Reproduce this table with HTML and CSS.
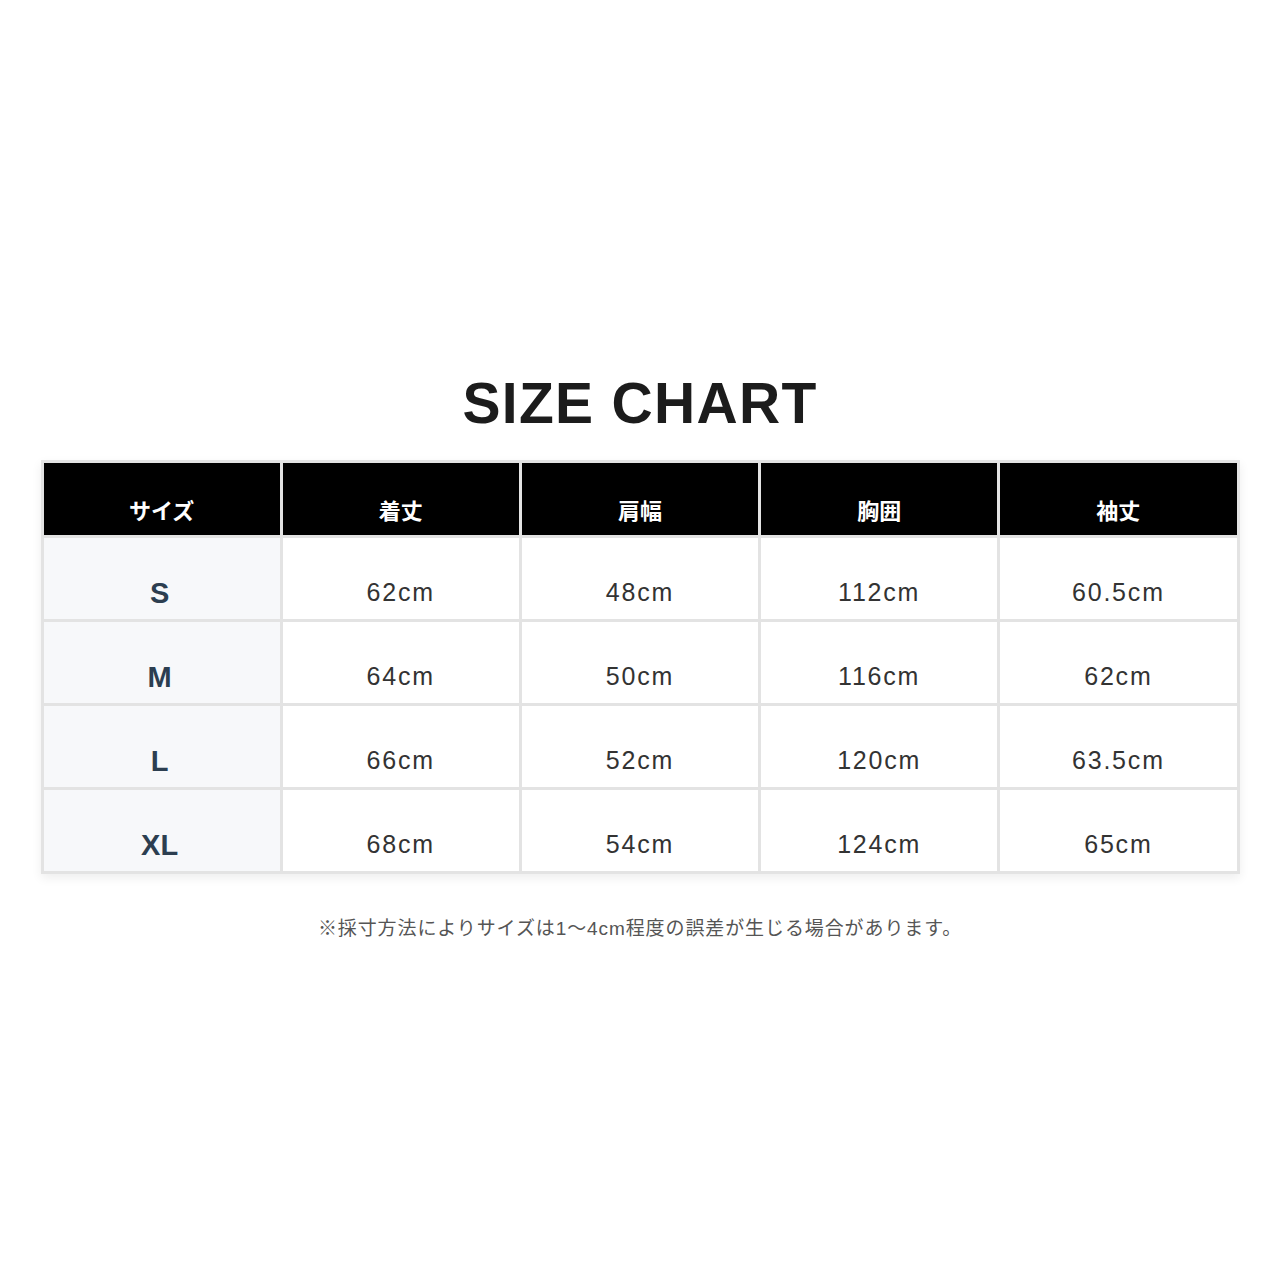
FILE: index.html
```html
<!DOCTYPE html>
<html lang="ja">
<head>
<meta charset="utf-8">
<title>SIZE CHART</title>
<link rel="stylesheet" href="styles.css">
</head>
<body>
<main class="page">
  <h1 class="title">SIZE CHART</h1>
  <table class="chart">
    <thead>
      <tr class="head-row">
        <th>サイズ</th>
        <th>着丈</th>
        <th>肩幅</th>
        <th>胸囲</th>
        <th>袖丈</th>
      </tr>
    </thead>
    <tbody>
      <tr><td class="size">S</td><td>62cm</td><td>48cm</td><td>112cm</td><td>60.5cm</td></tr>
      <tr><td class="size">M</td><td>64cm</td><td>50cm</td><td>116cm</td><td>62cm</td></tr>
      <tr><td class="size">L</td><td>66cm</td><td>52cm</td><td>120cm</td><td>63.5cm</td></tr>
      <tr><td class="size">XL</td><td>68cm</td><td>54cm</td><td>124cm</td><td>65cm</td></tr>
    </tbody>
  </table>
  <p class="note">※採寸方法によりサイズは1〜4cm程度の誤差が生じる場合があります。</p>
</main>
</body>
</html>
```

FILE: styles.css
```css
html, body {
  margin: 0;
  padding: 0;
  background: #ffffff;
}

.page {
  display: flex;
  flex-direction: column;
  align-items: center;
  padding-top: 375px;
  font-family: "Liberation Sans", "Noto Sans CJK JP", sans-serif;
}

.title {
  margin: 0;
  font-size: 57px;
  line-height: 57px;
  font-weight: 700;
  letter-spacing: 1.3px;
  color: #1c1c1c;
}

.chart {
  margin-top: 28px;
  width: 1199px;
  table-layout: fixed;
  border-collapse: collapse;
  box-shadow: 0 4px 10px rgba(0, 0, 0, 0.07);
}

.chart th,
.chart td {
  border: 3px solid #e3e3e3;
  text-align: center;
  vertical-align: top;
  padding: 0;
  line-height: 1;
}

.chart th {
  height: 75px;
  box-sizing: border-box;
  background: #000000;
  color: #ffffff;
  font-family: "Noto Sans CJK JP", sans-serif;
  font-weight: 700;
  font-size: 22px;
  padding-top: 35px;
}

.chart td {
  height: 84px;
  box-sizing: border-box;
  padding-top: 42px;
  font-size: 25px;
  letter-spacing: 1.8px;
  color: #333333;
  background: #ffffff;
}

.chart td.size {
  background: #f7f8fa;
  color: #2c3e50;
  font-weight: 700;
  font-size: 29px;
  letter-spacing: 0;
  padding-top: 41px;
  padding-right: 4px;
}

.note {
  margin: 45px 0 0;
  font-family: "Liberation Sans", "Noto Sans CJK JP", sans-serif;
  font-size: 19px;
  line-height: 19px;
  letter-spacing: 0.9px;
  color: #555555;
}
```
